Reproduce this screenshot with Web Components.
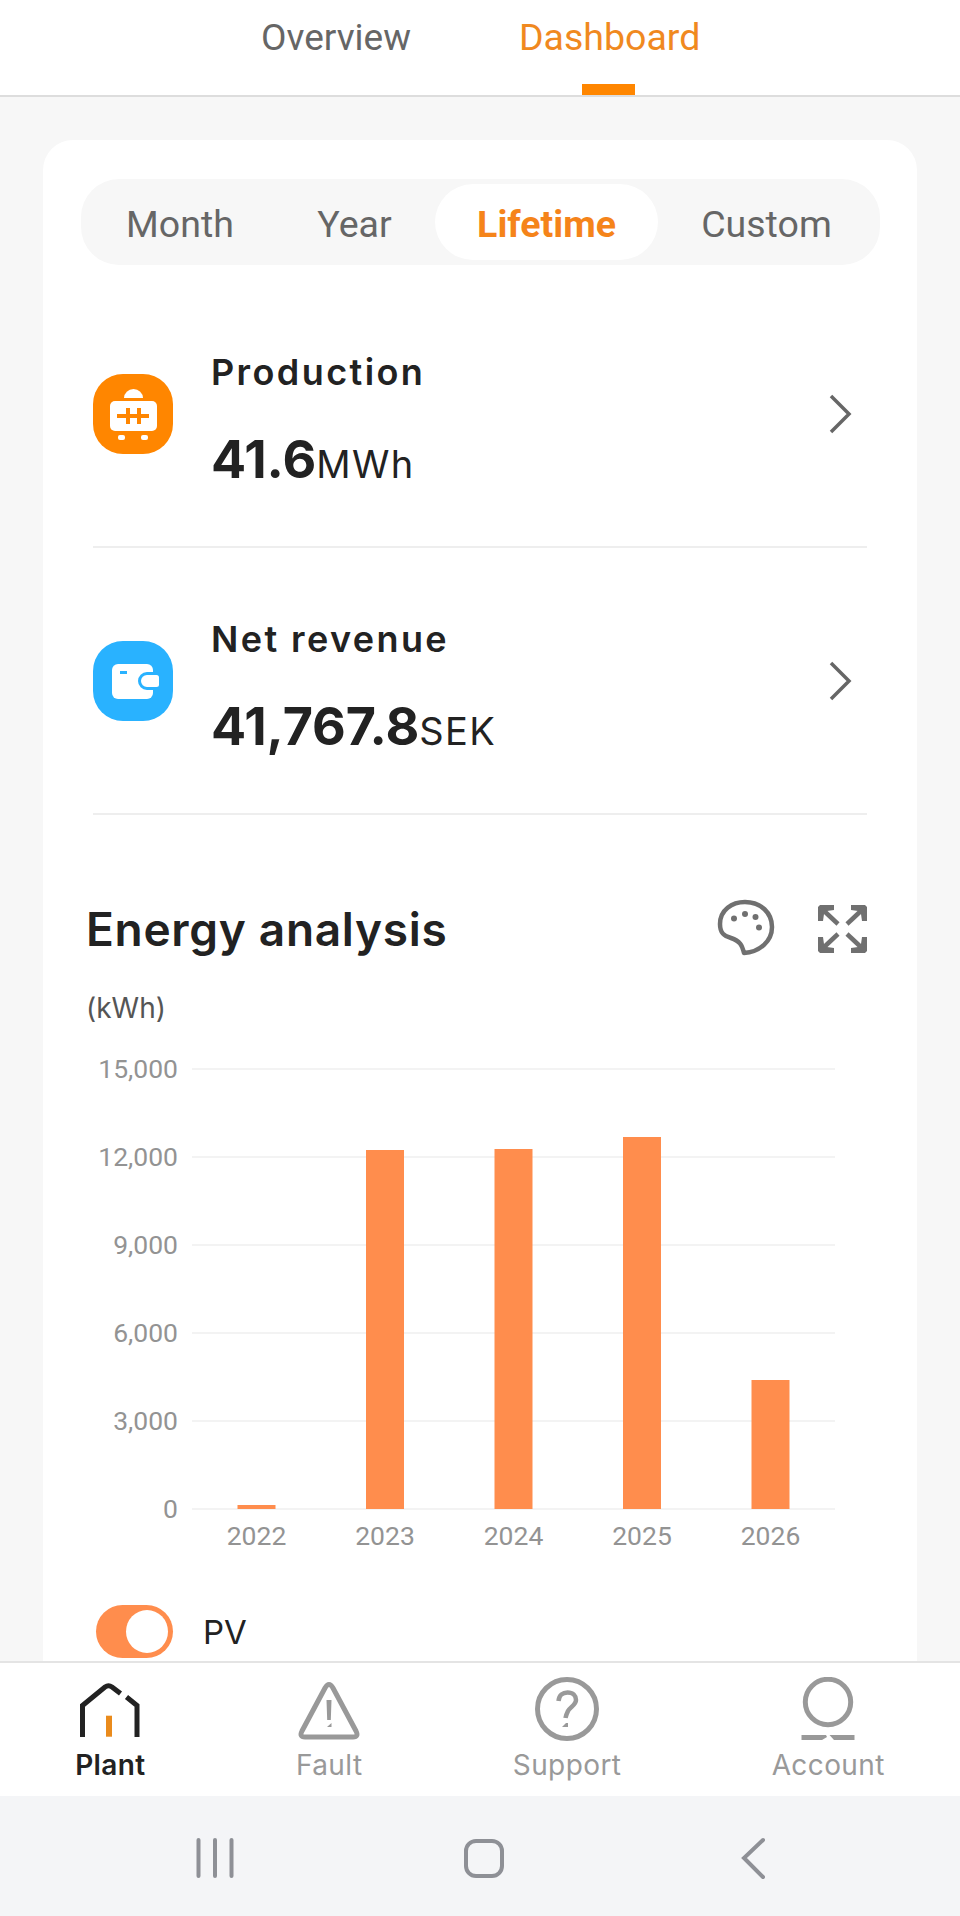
<!DOCTYPE html>
<html lang="en">
<head>
<meta charset="utf-8">
<title>Dashboard</title>
<style>
  html, body { margin: 0; height: 100%; }
  body { width: 960px; height: 1916px; overflow: hidden; display: flex; flex-direction: column; background: #f7f7f7; font-family: "Inter", "Liberation Sans", sans-serif; color: #222; }
  .scroll { flex: 1; min-height: 0; overflow: hidden; padding: 43px 43px 0; }
</style>
</head>
<body>
  <top-tabs></top-tabs>
  <div class="scroll">
    <dash-card>
      <period-switch></period-switch>
      <metric-row label="Production" value="41.6" unit="MWh" kind="production"></metric-row>
      <metric-row label="Net revenue" value="41,767.8" unit="SEK" kind="revenue"></metric-row>
      <analysis-head></analysis-head>
      <energy-chart></energy-chart>
      <legend-toggle>PV</legend-toggle>
    </dash-card>
  </div>
  <bottom-nav></bottom-nav>
  <system-bar></system-bar>

<script>
// top tabs
class TopTabs extends HTMLElement {
  constructor() {
    super();
    this.attachShadow({ mode: 'open' }).innerHTML = `
      <style>
        :host { display: flex; justify-content: flex-start; height: 95px; background: #fff; border-bottom: 2px solid #ddd; font: 37.5px/1 Roboto, sans-serif; flex: none; }
        .tab { color: #666; padding-top: 19px; position: relative; }
        .one { margin-left: 261px; width: 258px; font-size: 37px; }
        .two { color: #f0891f; }
        .two::after { content: ""; position: absolute; left: 63px; bottom: 0; width: 53px; height: 11px; background: #ff8600; }
      </style>
      <div class="tab one">Overview</div>
      <div class="tab two">Dashboard</div>`;
  }
}
customElements.define('top-tabs', TopTabs);

class DashCard extends HTMLElement {
  constructor() {
    super();
    this.attachShadow({ mode: 'open' }).innerHTML = `
      <style>
        :host { display: block; background: #fff; border-radius: 30px 30px 0 0; padding-top: 39px; height: 1600px; box-sizing: border-box; }
      </style>
      <slot></slot>`;
  }
}
customElements.define('dash-card', DashCard);

class PeriodSwitch extends HTMLElement {
  constructor() {
    super();
    this.attachShadow({ mode: 'open' }).innerHTML = `
      <style>
        :host { display: grid; grid-template-columns: 188px 161px 223px 217px; grid-auto-rows: 76px; margin: 0 37px 16px 38px; padding: 5px; height: 76px; background: #f7f7f7; border-radius: 38px; font: 37.5px/80px Roboto, sans-serif; color: #666; text-align: center; }
        .on { background: #fff; border-radius: 38px; color: #f5841a; font-weight: 700; }
      </style>
      <div>Month</div><div>Year</div><div class="on">Lifetime</div><div>Custom</div>`;
  }
}
customElements.define('period-switch', PeriodSwitch);

const METRIC_ICONS = {
  production: `<svg width="80" height="80" viewBox="0 0 80 80">
      <rect width="80" height="80" rx="30" fill="#ff8600"/>
      <path d="M31 24a9.500 9 0 0 1 19 0z" fill="#fff"/>
      <rect x="17" y="27" width="47" height="30" rx="5" fill="#fff"/>
      <rect x="25" y="61" width="7" height="5" rx="2" fill="#fff"/>
      <rect x="48" y="61" width="7" height="5" rx="2" fill="#fff"/>
      <path d="M24 42H56M35 34V50M46 34V50" stroke="#ff8600" stroke-width="4" fill="none"/>
    </svg>`,
  revenue: `<svg width="80" height="80" viewBox="0 0 80 80">
      <rect width="80" height="80" rx="30" fill="#29b2ff"/>
      <rect x="19" y="23" width="41" height="35" rx="6" fill="#fff"/>
      <rect x="50" y="34" width="16" height="12" rx="2.500" fill="#fff"/>
      <path d="M60 32.500H54a7.500 7.500 0 0 0 0 15H60" fill="none" stroke="#29b2ff" stroke-width="3"/>
      <rect x="27" y="30" width="7" height="3" fill="#29b2ff"/>
    </svg>`
};

class MetricRow extends HTMLElement {
  constructor() {
    super();
    const kind = this.getAttribute('kind');
    this.attachShadow({ mode: 'open' }).innerHTML = `
      <style>
        :host { display: flex; align-items: center; box-sizing: border-box; height: 267px; margin: 0 50px; border-bottom: 2px solid #eee; color: #222; }
        svg { display: block; flex: none; }
        .icon { margin-right: 38px; }
        .text { flex: 1; padding-top: 15px; }
        .label { font-size: 36px; font-weight: 600; line-height: 40px; letter-spacing: 2.4px; }
        .val { margin-top: 41px; line-height: 54px; font-size: 52px; font-weight: 700; white-space: nowrap; }
        .val span { font-size: 38px; font-weight: 400; letter-spacing: 1.4px; }
        .chev { margin-right: 14px; }
      </style>
      <div class="icon">${METRIC_ICONS[kind]}</div>
      <div class="text">
        <div class="label">${this.getAttribute('label')}</div>
        <div class="val">${this.getAttribute('value')}<span>${this.getAttribute('unit')}</span></div>
      </div>
      <svg class="chev" width="26" height="42" viewBox="0 0 26 42"><path d="M4 3L22 21L4 39" fill="none" stroke="#666" stroke-width="3.500"/></svg>`;
  }
}
customElements.define('metric-row', MetricRow);

class AnalysisHead extends HTMLElement {
  constructor() {
    super();
    this.attachShadow({ mode: 'open' }).innerHTML = `
      <style>
        :host { display: flex; align-items: center; height: 60px; margin: 84px 50px 0 43px; }
        h2 { flex: 1; margin: 0; font-size: 46px; font-weight: 600; letter-spacing: 0.7px; }
        svg { display: block; flex: none; }
        .pal { margin-right: 41px; }
      </style>
      <h2>Energy analysis</h2>
      <svg class="pal" width="60" height="60" viewBox="28 20 60 60">
        <path d="M55 74C53 66 51 62 42 59C35 57 31 54 31 45C31 31 43 23 56 23C72 23 83 34 83 48C83 62 71 73 55 74Z" fill="none" stroke="#707070" stroke-width="4.500" stroke-linejoin="round"/>
        <circle cx="45" cy="39.500" r="3" fill="#707070"/><circle cx="56" cy="35" r="3" fill="#707070"/><circle cx="66.500" cy="38" r="3" fill="#707070"/><circle cx="70" cy="48.500" r="3" fill="#707070"/>
      </svg>
      <svg width="49" height="48" viewBox="0 0 49 48" fill="#707070" stroke="none">
        <g><path d="M2 0H16V5L9 6L6 9L5 16H0V2Z"/><path d="M4 4L20 19" stroke="#707070" stroke-width="4.500"/></g>
        <g transform="translate(49 0) scale(-1 1)"><path d="M2 0H16V5L9 6L6 9L5 16H0V2Z"/><path d="M4 4L20 19" stroke="#707070" stroke-width="4.500"/></g>
        <g transform="translate(0 48) scale(1 -1)"><path d="M2 0H16V5L9 6L6 9L5 16H0V2Z"/><path d="M4 4L20 19" stroke="#707070" stroke-width="4.500"/></g>
        <g transform="translate(49 48) scale(-1 -1)"><path d="M2 0H16V5L9 6L6 9L5 16H0V2Z"/><path d="M4 4L20 19" stroke="#707070" stroke-width="4.500"/></g>
      </svg>`;
  }
}
customElements.define('analysis-head', AnalysisHead);

class EnergyChart extends HTMLElement {
  constructor() {
    super();
    const years = [['2022', 1505], ['2023', 1150], ['2024', 1149], ['2025', 1137], ['2026', 1380]];
    const ticks = ['15,000', '12,000', '9,000', '6,000', '3,000', '0'];
    const grid = ticks.map((t, i) => {
      const y = 1069 + i * 88;
      return `<line x1="192" x2="835" y1="${y}" y2="${y}" stroke="#f3f3f3" stroke-width="2"/>
        <text x="178" y="${y + 9}" text-anchor="end" class="ax">${t}</text>`;
    }).join('');
    const bars = years.map(([y, top], i) => {
      const cx = 256.5 + i * 128.5;
      return `<rect x="${cx - 19}" y="${top}" width="38" height="${1509 - top}" fill="#ff8d4d"/>
        <text x="${cx}" y="1545" text-anchor="middle" class="ax">${y}</text>`;
    }).join('');
    this.attachShadow({ mode: 'open' }).innerHTML = `
      <style>
        :host { display: block; margin-top: 21px; }
        svg { display: block; }
        .ax { font: 26.500px Roboto, sans-serif; fill: #939393; }
        .unit { font: 28px Inter, sans-serif; fill: #555; }
      </style>
      <svg width="874" height="560" viewBox="43 980 874 560" style="overflow:visible">
        <text x="86" y="1018" class="unit">(kWh)</text>
        ${grid}${bars}
      </svg>`;
  }
}
customElements.define('energy-chart', EnergyChart);

class LegendToggle extends HTMLElement {
  constructor() {
    super();
    this.attachShadow({ mode: 'open' }).innerHTML = `
      <style>
        :host { display: flex; align-items: center; margin: 65px 0 0 53px; font-size: 33px; color: #222; }
        .sw { width: 77px; height: 53px; box-sizing: border-box; padding: 5px 5px 5px 30px; border-radius: 27px; background: #ff8d4d; margin-right: 30px; }
        .sw i { display: block; width: 42px; height: 43px; border-radius: 50%; background: #fff; }
      </style>
      <div class="sw"><i></i></div><slot></slot>`;
  }
}
customElements.define('legend-toggle', LegendToggle);

const NAV_ICONS = {
  plant: `<path d="M4.500 60V28.500L27 10Q30.500 7.500 34 10L42.500 16.500M48.500 20L59 28.500V60" fill="none" stroke="#222" stroke-width="5"/><rect x="28" y="38.700" width="6" height="21" fill="#ea8b1c"/>`,
  fault: `<path d="M28 11Q32 4 36 11L59 54Q62 60 56 60H8Q2 60 5 54Z" fill="none" stroke="#999" stroke-width="5"/><path d="M29.500 23H34.500L33.800 43H30.200ZM30 50L34.500 46V50Z" fill="#999"/>`,
  support: `<circle cx="32" cy="32" r="29.500" fill="none" stroke="#999" stroke-width="5"/><path d="M23.500 24C24 18 28 15.500 32.500 15.500C38 15.500 41 19 41 23C41 28 35 30 33 34C32 36 31 38 30.500 41" fill="none" stroke="#999" stroke-width="4.500"/><path d="M27 50L31 46H33V50Z" fill="#999"/>`,
  account: `<circle cx="32" cy="25" r="22.700" fill="none" stroke="#999" stroke-width="5"/><path d="M5.500 58H30L31 60L26 63H5.500ZM33.500 58H58.500V63H38Z" fill="#999"/>`
};

class NavItem extends HTMLElement {
  constructor() {
    super();
    const on = this.hasAttribute('active');
    this.attachShadow({ mode: 'open' }).innerHTML = `
      <style>
        :host { display: flex; flex-direction: column; align-items: center; font-size: 28px; line-height: 32px; color: ${on ? '#222' : '#999'}; font-weight: ${on ? 600 : 400}; letter-spacing: 0.4px; }
        svg { display: block; margin-bottom: 8px; }
      </style>
      <svg width="64" height="64" viewBox="0 0 64 64">${NAV_ICONS[this.getAttribute('icon')]}</svg>
      <slot></slot>`;
  }
}
customElements.define('nav-item', NavItem);

class BottomNav extends HTMLElement {
  constructor() {
    super();
    this.attachShadow({ mode: 'open' }).innerHTML = `
      <style>
        :host { display: flex; justify-content: space-around; flex: none; box-sizing: border-box; height: 135px; padding-top: 14px; background: #fff; border-top: 2px solid #e4e4e4; }
      </style>
      <nav-item icon="plant" active>Plant</nav-item>
      <nav-item icon="fault">Fault</nav-item>
      <nav-item icon="support">Support</nav-item>
      <nav-item icon="account">Account</nav-item>`;
  }
}
customElements.define('bottom-nav', BottomNav);

class SystemBar extends HTMLElement {
  constructor() {
    super();
    this.attachShadow({ mode: 'open' }).innerHTML = `
      <style>
        :host { display: block; flex: none; height: 120px; background: #f4f5f7; }
        svg { display: block; }
      </style>
      <svg width="960" height="120" viewBox="0 1796 960 120" fill="none" stroke="#8e9096" stroke-width="4" stroke-linecap="round">
        <path d="M198.500 1840V1876M215 1840V1876M231.500 1840V1876"/>
        <rect x="466" y="1841" width="36" height="35" rx="10"/>
        <path d="M763 1840L744 1858L763 1877"/>
      </svg>`;
  }
}
customElements.define('system-bar', SystemBar);
</script>
</body>
</html>
